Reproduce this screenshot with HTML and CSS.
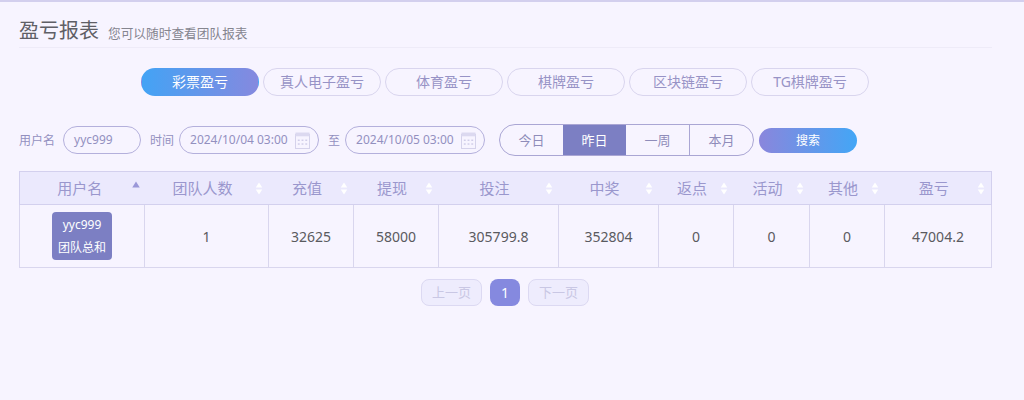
FILE: index.html
```html
<!DOCTYPE html>
<html lang="zh-CN">
<head>
<meta charset="UTF-8" />
<meta name="viewport" content="width=device-width, initial-scale=1" />
<title>盈亏报表</title>
<link rel="stylesheet" href="styles.css">
</head>
<body>

<svg class="icon-defs" width="0" height="0">
  <symbol id="sortIcon" viewBox="1.5 0 7 14">
    <path d="M5 0.5 L8.5 6 H1.5 Z" />
    <path d="M5 13.5 L8.5 8 H1.5 Z" />
  </symbol>
  <symbol id="calIcon" viewBox="0 0 16 18">
    <rect x="0.5" y="2.5" width="15" height="15" fill="none" stroke="#d3d0ea" />
    <rect x="0.5" y="0.5" width="15" height="4" fill="#dcd9f0" />
    <g fill="#cfcce8">
      <rect x="3" y="8" width="2" height="1.5" /><rect x="7" y="8" width="2" height="1.5" /><rect x="11" y="8" width="2" height="1.5" />
      <rect x="3" y="12" width="2" height="1.5" /><rect x="7" y="12" width="2" height="1.5" /><rect x="11" y="12" width="2" height="1.5" />
    </g>
  </symbol>
</svg>

<div class="page-head">
  <h1 class="page-title">盈亏报表</h1>
  <span class="page-sub">您可以随时查看团队报表</span>
</div>

<div class="tabs">
  <a class="tab tab-active">彩票盈亏</a>
  <a class="tab">真人电子盈亏</a>
  <a class="tab">体育盈亏</a>
  <a class="tab">棋牌盈亏</a>
  <a class="tab">区块链盈亏</a>
  <a class="tab">TG棋牌盈亏</a>
</div>

<div class="filters">
  <label class="filter-label">用户名</label>
  <div class="field field-user">yyc999</div>
  <label class="filter-label">时间</label>
  <div class="field field-date">2024/10/04 03:00<svg class="cal"><use href="#calIcon" /></svg></div>
  <label class="filter-label">至</label>
  <div class="field field-date">2024/10/05 03:00<svg class="cal"><use href="#calIcon" /></svg></div>
  <div class="range">
    <a class="range-item">今日</a>
    <a class="range-item range-active">昨日</a>
    <a class="range-item">一周</a>
    <a class="range-item">本月</a>
  </div>
  <button class="search-button">搜索</button>
</div>

<table class="report">
  <colgroup>
    <col class="c1"><col class="c2"><col class="c3"><col class="c4"><col class="c5">
    <col class="c6"><col class="c7"><col class="c8"><col class="c9"><col class="c10">
  </colgroup>
  <thead>
    <tr>
      <th>用户名<svg class="sort sort-asc"><use href="#sortIcon" /></svg></th>
      <th>团队人数<svg class="sort"><use href="#sortIcon" /></svg></th>
      <th>充值<svg class="sort"><use href="#sortIcon" /></svg></th>
      <th>提现<svg class="sort"><use href="#sortIcon" /></svg></th>
      <th>投注<svg class="sort"><use href="#sortIcon" /></svg></th>
      <th>中奖<svg class="sort"><use href="#sortIcon" /></svg></th>
      <th>返点<svg class="sort"><use href="#sortIcon" /></svg></th>
      <th>活动<svg class="sort"><use href="#sortIcon" /></svg></th>
      <th>其他<svg class="sort"><use href="#sortIcon" /></svg></th>
      <th>盈亏<svg class="sort"><use href="#sortIcon" /></svg></th>
    </tr>
  </thead>
  <tbody>
    <tr>
      <td><div class="user-badge">yyc999<br>团队总和</div></td>
      <td>1</td>
      <td>32625</td>
      <td>58000</td>
      <td>305799.8</td>
      <td>352804</td>
      <td>0</td>
      <td>0</td>
      <td>0</td>
      <td>47004.2</td>
    </tr>
  </tbody>
</table>

<div class="pager">
  <a class="page-btn">上一页</a>
  <a class="page-num">1</a>
  <a class="page-btn">下一页</a>
</div>

</body>
</html>
```

FILE: styles.css
```css
html, body {
  margin: 0;
  padding: 0;
  height: 100%;
}

body {
  box-sizing: border-box;
  height: 400px;
  overflow: hidden;
  padding: 0 32px 0 19px;
  background-color: #f7f4ff;
  border-top: 2px solid #d3cfee;
  font-family: "Noto Sans", "Noto Sans CJK SC", sans-serif;
  color: #555;
}

.icon-defs { position: absolute; }

.page-head {
  display: flex;
  align-items: baseline;
  gap: 9px;
  height: 46px;
  box-sizing: border-box;
  padding-top: 15px;
  border-bottom: 1px solid #eeebf8;
}

.page-title {
  margin: 0;
  font-size: 20px;
  font-weight: 400;
  line-height: 28px;
  color: #5f5f66;
}

.page-sub {
  font-size: 12.7px;
  color: #85858f;
}

.tabs {
  display: flex;
  justify-content: center;
  gap: 4px;
  margin-top: 20px;
  padding-right: 1px;
}

.tab {
  box-sizing: border-box;
  width: 118px;
  height: 28px;
  line-height: 26px;
  border: 1px solid #d9d5ee;
  border-radius: 14px;
  text-align: center;
  font-size: 14px;
  color: #9793c6;
}

.tab-active {
  border-color: transparent;
  background: linear-gradient(to right, #43a3f5, #8589df);
  color: #fff;
}

.filters {
  display: flex;
  align-items: center;
  margin-top: 28px;
  height: 32px;
  font-size: 12px;
}

.filter-label {
  color: #9390bf;
}

.field {
  box-sizing: border-box;
  height: 28px;
  line-height: 26px;
  border: 1px solid #b4b0dc;
  border-radius: 14px;
  color: #9390bf;
  font-size: 12px;
  padding-left: 10px;
}

.field-user {
  width: 78px;
  margin: 0 9px 0 8px;
}

.field-date {
  display: flex;
  align-items: center;
  width: 140px;
  margin: 0 9px 0 5px;
}

.field-date + .filter-label + .field-date { margin: 0 14px 0 5px; }

.cal {
  width: 15px;
  height: 17px;
  margin-left: 7px;
}

.range {
  display: flex;
  box-sizing: border-box;
  width: 255px;
  height: 32px;
  border: 1px solid #aaa6d4;
  border-radius: 16px;
  overflow: hidden;
}

.range-item {
  flex: 1;
  line-height: 30px;
  text-align: center;
  font-size: 13px;
  color: #8f8cba;
  border-left: 1px solid #aaa6d4;
}

.range-item:first-child { border-left: none; }

.range-active {
  background-color: #7c7fc3;
  border-left: none;
  color: #fff;
}

.range-active + .range-item { border-left: none; }

.search-button {
  width: 98px;
  height: 25px;
  margin-left: 5px;
  padding: 0;
  border: none;
  border-radius: 13px;
  background: linear-gradient(to right, #8a86dc, #43a6f6);
  color: #fff;
  font-family: inherit;
  font-size: 12px;
}

.report {
  width: 972px;
  margin-top: 15px;
  border-collapse: collapse;
  table-layout: fixed;
  font-size: 14px;
}

.c1 { width: 125px; }
.c2 { width: 124px; }
.c3 { width: 85px; }
.c4 { width: 85px; }
.c5 { width: 120px; }
.c6 { width: 100px; }
.c7 { width: 75px; }
.c8 { width: 76px; }
.c9 { width: 75px; }
.c10 { width: 107px; }

.report th {
  position: relative;
  height: 31px;
  padding: 0 8px 1px 0;
  background-color: #ebe9fd;
  border: 1px solid #d3d0ee;
  border-left: none;
  border-right: none;
  font-size: 15px;
  font-weight: 400;
  color: #9a97cd;
}

.report th:first-child {
  padding-right: 5px;
  border-left: 1px solid #d3d0ee;
}

.report th:last-child { border-right: 1px solid #d3d0ee; }

.report td {
  height: 62px;
  padding: 0;
  border: 1px solid #d9d6ee;
  text-align: center;
  color: #5a5a60;
}

.sort {
  position: absolute;
  top: 10px;
  right: 6px;
  width: 8px;
  height: 13px;
  fill: #fff;
}

.report th:first-child .sort { right: 4px; }

.sort-asc {
  top: 9px;
  width: 10px;
  height: 15px;
  fill: #9a97d8;
  clip-path: inset(0 0 50% 0);
}

.user-badge {
  width: 60px;
  height: 48px;
  margin: 0 auto;
  box-sizing: border-box;
  padding-top: 1px;
  background-color: #7c7fc3;
  border-radius: 4px;
  font-size: 12px;
  line-height: 23px;
  color: #fff;
}

.pager {
  display: flex;
  justify-content: center;
  gap: 8px;
  margin-top: 11px;
  padding-right: 1px;
}

.page-btn {
  box-sizing: border-box;
  width: 61px;
  height: 27px;
  line-height: 25px;
  border: 1px solid #dcd9f2;
  border-radius: 8px;
  background-color: #eeecfd;
  text-align: center;
  font-size: 13px;
  color: #c9c7e4;
}

.page-num {
  width: 30px;
  height: 27px;
  line-height: 27px;
  border-radius: 8px;
  background-color: #8589df;
  text-align: center;
  font-size: 14px;
  color: #fff;
}
```
